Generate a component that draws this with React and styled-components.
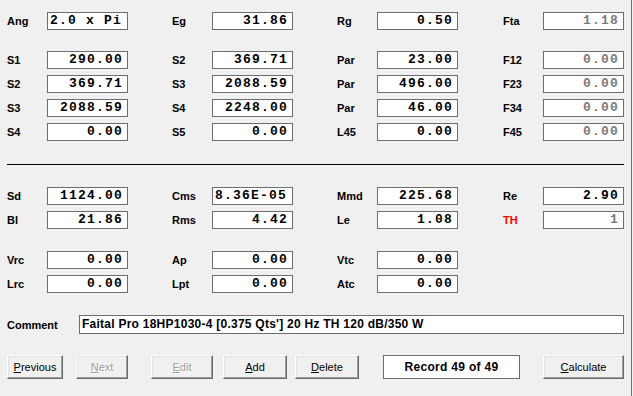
import React from 'react';
import styled, { createGlobalStyle } from 'styled-components';

const GlobalStyle = createGlobalStyle`
  html, body {
    margin: 0;
    padding: 0;
    background: #f0f0f0;
  }
  body {
    font-family: "Liberation Sans", Arial, sans-serif;
    font-size: 11px;
    color: #000;
  }
`;

const Window = styled.div`
  width: 624px;
  height: 396px;
  padding: 12px 0 0 7px;
  border-right: 1px solid #6e6e6e;
  box-sizing: content-box;
  display: flex;
  flex-direction: column;
`;

const Grid = styled.div`
  display: grid;
  grid-template-columns: 165px 165px 166px 128px;
  grid-auto-rows: 18px;
  row-gap: 6px;
  margin-top: ${props => props.top || 0}px;
`;

const Field = styled.div`
  display: flex;
  align-items: center;
  grid-column: ${props => props.col};
`;

const Label = styled.span`
  width: 40px;
  flex: none;
  font-weight: bold;
  font-size: 11px;
  color: ${props => (props.red ? '#ff0000' : '#000')};
`;

const Box = styled.div`
  width: 81px;
  height: 18px;
  box-sizing: border-box;
  border: 1px solid #6d6d6d;
  background: #fff;
  font-family: "Liberation Mono", "DejaVu Sans Mono", monospace;
  font-weight: bold;
  font-size: 13px;
  letter-spacing: 1.2px;
  line-height: 16px;
  padding: 0 4px 0 2px;
  text-align: ${props => (props.left ? 'left' : 'right')};
  color: ${props => (props.disabled ? '#7a7a7a' : '#000')};
  white-space: pre;
  overflow: hidden;
`;

const Divider = styled.div`
  width: 617px;
  height: 1px;
  background: #000;
  margin-top: 23px;
`;

const CommentRow = styled.div`
  display: flex;
  align-items: center;
  margin-top: 22px;
`;

const CommentLabel = styled.span`
  width: 72px;
  flex: none;
  font-weight: bold;
`;

const CommentBox = styled.div`
  flex: none;
  width: 545px;
  height: 19px;
  box-sizing: border-box;
  border: 1px solid #6d6d6d;
  background: #fff;
  font-weight: bold;
  font-size: 12px;
  letter-spacing: 0.25px;
  line-height: 17px;
  padding-left: 2px;
  white-space: nowrap;
`;

const ButtonRow = styled.div`
  display: flex;
  margin-top: 21px;
  height: 24px;
`;

const Button = styled.div`
  width: ${props => props.w}px;
  margin-left: ${props => props.gap || 0}px;
  height: 24px;
  box-sizing: border-box;
  background: #f0f0f0;
  border-top: 1px solid #fff;
  border-left: 1px solid #fff;
  border-right: 1px solid #696969;
  border-bottom: 1px solid #696969;
  box-shadow: inset -1px -1px 0 #a0a0a0, inset 1px 1px 0 #e3e3e3;
  display: flex;
  align-items: center;
  justify-content: center;
  font-size: 11px;
  color: ${props => (props.disabled ? '#a0a0a0' : '#000')};
  text-shadow: ${props => (props.disabled ? '1px 1px 0 #fff' : 'none')};
  u { text-decoration: underline; }
`;

const RecordBox = styled.div`
  width: 137px;
  margin-left: 24px;
  height: 24px;
  box-sizing: border-box;
  border: 1px solid #6d6d6d;
  background: #fff;
  display: flex;
  align-items: center;
  justify-content: center;
  font-weight: bold;
  font-size: 12px;
  letter-spacing: 0.3px;
`;

function F({ col, label, value, disabled, left, red }) {
  return (
    <Field col={col}>
      <Label red={red}>{label}</Label>
      <Box disabled={disabled} left={left}>{value}</Box>
    </Field>
  );
}

export default function App() {
  return (
    <>
      <GlobalStyle />
      <Window>
        <Grid>
          <F col={1} label="Ang" value="2.0 x Pi" left />
          <F col={2} label="Eg" value="31.86" />
          <F col={3} label="Rg" value="0.50" />
          <F col={4} label="Fta" value="1.18" disabled />
        </Grid>
        <Grid top={21}>
          <F col={1} label="S1" value="290.00" />
          <F col={2} label="S2" value="369.71" />
          <F col={3} label="Par" value="23.00" />
          <F col={4} label="F12" value="0.00" disabled />
          <F col={1} label="S2" value="369.71" />
          <F col={2} label="S3" value="2088.59" />
          <F col={3} label="Par" value="496.00" />
          <F col={4} label="F23" value="0.00" disabled />
          <F col={1} label="S3" value="2088.59" />
          <F col={2} label="S4" value="2248.00" />
          <F col={3} label="Par" value="46.00" />
          <F col={4} label="F34" value="0.00" disabled />
          <F col={1} label="S4" value="0.00" />
          <F col={2} label="S5" value="0.00" />
          <F col={3} label="L45" value="0.00" />
          <F col={4} label="F45" value="0.00" disabled />
        </Grid>
        <Divider />
        <Grid top={22}>
          <F col={1} label="Sd" value="1124.00" />
          <F col={2} label="Cms" value="8.36E-05" left />
          <F col={3} label="Mmd" value="225.68" />
          <F col={4} label="Re" value="2.90" />
          <F col={1} label="Bl" value="21.86" />
          <F col={2} label="Rms" value="4.42" />
          <F col={3} label="Le" value="1.08" />
          <F col={4} label="TH" value="1" disabled red />
        </Grid>
        <Grid top={22}>
          <F col={1} label="Vrc" value="0.00" />
          <F col={2} label="Ap" value="0.00" />
          <F col={3} label="Vtc" value="0.00" />
          <F col={1} label="Lrc" value="0.00" />
          <F col={2} label="Lpt" value="0.00" />
          <F col={3} label="Atc" value="0.00" />
        </Grid>
        <CommentRow>
          <CommentLabel>Comment</CommentLabel>
          <CommentBox>Faital Pro 18HP1030-4 [0.375 Qts'] 20 Hz TH 120 dB/350 W</CommentBox>
        </CommentRow>
        <ButtonRow>
          <Button w={56}><span><u>P</u>revious</span></Button>
          <Button w={52} gap={13} disabled><span><u>N</u>ext</span></Button>
          <Button w={62} gap={23} disabled><span><u>E</u>dit</span></Button>
          <Button w={64} gap={10}><span><u>A</u>dd</span></Button>
          <Button w={64} gap={8}><span><u>D</u>elete</span></Button>
          <RecordBox>Record 49 of 49</RecordBox>
          <Button w={81} gap={23}><span><u>C</u>alculate</span></Button>
        </ButtonRow>
      </Window>
    </>
  );
}
